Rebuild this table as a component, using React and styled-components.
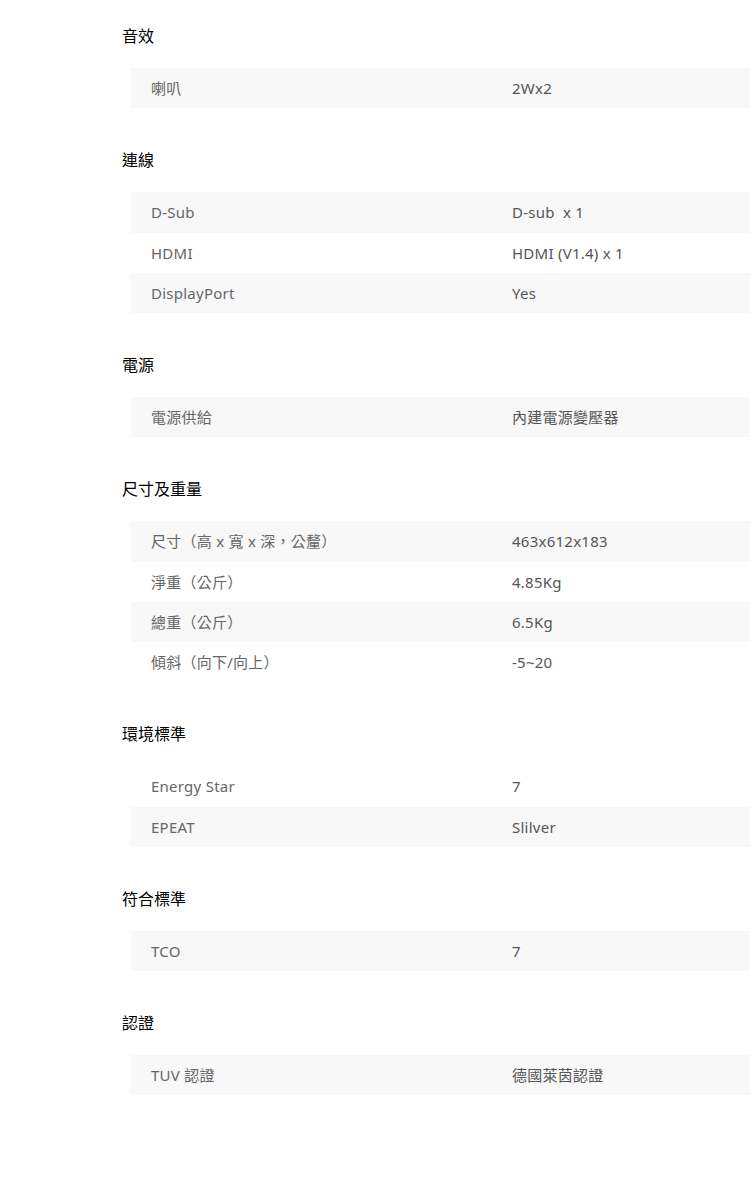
import styled, { createGlobalStyle } from "styled-components";

const GlobalStyle = createGlobalStyle`
  body {
    margin: 0;
    background: #fff;
    font-family: "Noto Sans", "Noto Sans CJK TC", sans-serif;
    overflow-x: hidden;
  }
`;

const specs = [
  { title: "音效", rows: [["喇叭", "2Wx2", true]] },
  {
    title: "連線",
    rows: [
      ["D-Sub", "D-sub\u00a0\u00a0x 1", true],
      ["HDMI", "HDMI (V1.4) x 1", false],
      ["DisplayPort", "Yes", true],
    ],
  },
  { title: "電源", rows: [["電源供給", "內建電源變壓器", true]] },
  {
    title: "尺寸及重量",
    rows: [
      ["尺寸（高 x 寬 x 深，公釐）", "463x612x183", true],
      ["淨重（公斤）", "4.85Kg", false],
      ["總重（公斤）", "6.5Kg", true],
      ["傾斜（向下/向上）", "-5~20", false],
    ],
  },
  {
    title: "環境標準",
    rows: [
      ["Energy Star", "7", false],
      ["EPEAT", "Slilver", true],
    ],
  },
  { title: "符合標準", rows: [["TCO", "7", true]] },
  { title: "認證", rows: [["TUV 認證", "德國萊茵認證", true]] },
];

const Page = styled.div`
  padding: 24px 0 88px 122px;
  display: flex;
  flex-direction: column;
  gap: 40px;
`;

const Section = styled.section`
  display: flex;
  flex-direction: column;
`;

const Heading = styled.h3`
  margin: 0 0 20px;
  font-size: 16px;
  line-height: 24px;
  font-weight: 400;
  color: #000;
`;

const Row = styled.div`
  display: grid;
  grid-template-columns: 361px 1fr;
  margin-left: 9px;
  padding: 9px 0 9px 20px;
  line-height: 22.25px;
  font-size: 15px;
  letter-spacing: 0.25px;
  background: ${({ shaded }) => (shaded ? "#f8f8f8" : "#fff")};
`;

const Label = styled.span`
  color: #666;
`;

const Value = styled.span`
  color: #555;
`;

function App() {
  return (
    <>
      <GlobalStyle />
      <Page lang="zh-Hant-TW">
        {specs.map((s) => (
          <Section key={s.title}>
            <Heading>{s.title}</Heading>
            {s.rows.map(([label, value, shaded]) => (
              <Row key={label} shaded={shaded}>
                <Label>{label}</Label>
                <Value>{value}</Value>
              </Row>
            ))}
          </Section>
        ))}
      </Page>
    </>
  );
}

export default App;
